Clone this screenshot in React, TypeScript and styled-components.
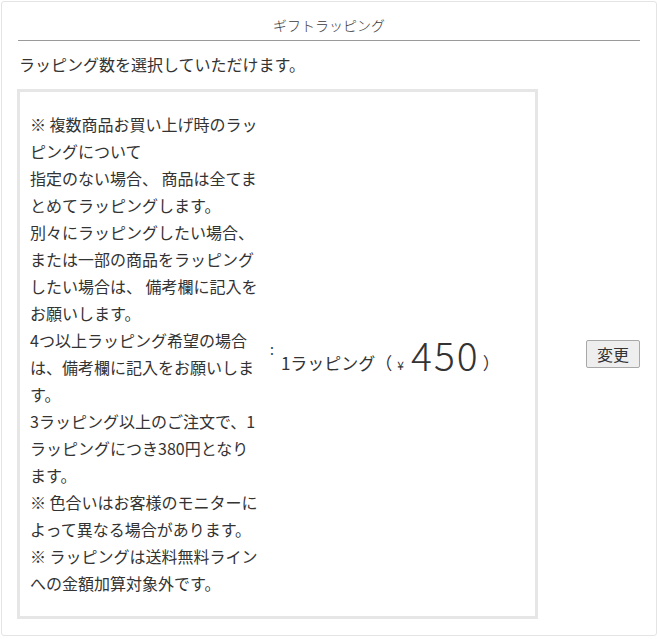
import React from "react";
import styled, { createGlobalStyle } from "styled-components";

const GlobalStyle = createGlobalStyle`
  html, body {
    margin: 0;
    padding: 0;
    background: #ffffff;
  }
  body {
    font-family: "Noto Sans CJK JP", "Noto Sans", sans-serif;
    color: #333333;
  }
`;

const notes = [
  "※ 複数商品お買い上げ時のラッピングについて",
  "指定のない場合、 商品は全てまとめてラッピングします。",
  "別々にラッピングしたい場合、または一部の商品をラッピングしたい場合は、 備考欄に記入をお願いします。",
  "4つ以上ラッピング希望の場合は、備考欄に記入をお願いします。",
  "3ラッピング以上のご注文で、1ラッピングにつき380円となります。",
  "※ 色合いはお客様のモニターによって異なる場合があります。",
  "※ ラッピングは送料無料ラインへの金額加算対象外です。",
];

const App = () => {
  return (
    <>
      <GlobalStyle />
      <Panel>
        <Heading>ギフトラッピング</Heading>
        <Lead>ラッピング数を選択していただけます。</Lead>
        <Row>
          <OptionBox>
            <Notes>
              {notes.map((line, i) => (
                <React.Fragment key={i}>
                  {line}
                  {i < notes.length - 1 && <br />}
                </React.Fragment>
              ))}
            </Notes>
            <Colon>:</Colon>
            <Value>
              1ラッピング（<Yen>¥</Yen>
              <Price>450</Price>）
            </Value>
          </OptionBox>
          <ChangeButton type="button">変更</ChangeButton>
        </Row>
      </Panel>
    </>
  );
};

export default App;

const Panel = styled.div`
  margin: 1px;
  width: 656px;
  box-sizing: border-box;
  border: 1px solid #e4e4e4;
  border-radius: 3px;
  padding: 0 16px 16px;
`;

const Heading = styled.h2`
  margin: 0;
  padding: 13px 0 5px;
  border-bottom: 1px solid #9a9a9a;
  text-align: center;
  font-size: 14px;
  line-height: 20px;
  font-weight: 300;
  color: #3a3a3a;
`;

const Lead = styled.p`
  margin: 10px 0 12px;
  padding-left: 1px;
  font-size: 16px;
  line-height: 26px;
  color: #333333;
`;

const Row = styled.div`
  display: flex;
  align-items: center;
  justify-content: space-between;
`;

const OptionBox = styled.div`
  display: flex;
  align-items: center;
  margin-left: -1px;
  width: 521px;
  box-sizing: border-box;
  border: 3px solid #e6e6e6;
`;

const Notes = styled.div`
  width: 229px;
  flex: none;
  padding: 19px 0 19px 10px;
  font-size: 16px;
  line-height: 27px;
  color: #333333;
`;

const Colon = styled.div`
  flex: none;
  padding: 0 0 10px 11px;
  font-size: 14px;
  line-height: 20px;
  color: #333333;
`;

const Value = styled.div`
  flex: none;
  padding-left: 7px;
  font-size: 17px;
  color: #333333;
  white-space: nowrap;
`;

const Yen = styled.span`
  margin-left: 5px;
  font-size: 12px;
`;

const Price = styled.span`
  margin: 0 3px 0 7px;
  font-size: 39px;
  font-weight: 300;
  letter-spacing: 2px;
  vertical-align: -1px;
  line-height: 40px;
`;

const ChangeButton = styled.button`
  font-family: "Noto Sans CJK JP", sans-serif;
  font-size: 16px;
  line-height: 22px;
  padding: 2px 10px;
  border: 1px solid #a8a8a8;
  border-radius: 2px;
  background: #eeeeee;
  color: #333333;
  cursor: pointer;
`;
